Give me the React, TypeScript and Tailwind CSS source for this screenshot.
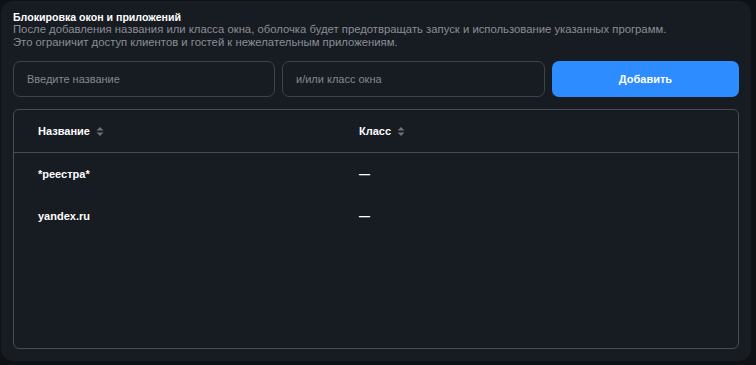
import React from "react";

function SortIcon() {
  return (
    <svg width="8" height="11" viewBox="0 0 8 11" className="ml-[6px] shrink-0">
      <path d="M4 1 L7.5 4.5 L0.5 4.5 Z" fill="#6e7179" />
      <path d="M4 10 L7.5 6.5 L0.5 6.5 Z" fill="#6e7179" />
    </svg>
  );
}

export default function App() {
  const rows = [
    { name: "*реестра*", cls: "—" },
    { name: "yandex.ru", cls: "—" },
  ];
  return (
    <div
      className="w-[756px] h-[365px] bg-[#0e1216] p-[1px] pr-[5px] pb-[4px]"
      style={{ fontFamily: '"Liberation Sans", Arial, sans-serif' }}
    >
      <div className="h-full rounded-[12px] bg-[#171b22] p-[12px] pt-[10px] flex flex-col">
        <div className="text-[10.6px] leading-[12px] font-bold text-white">Блокировка окон и приложений</div>
        <div className="text-[11.3px] leading-[13px] text-[#8b8e94]">
          После добавления названия или класса окна, оболочка будет предотвращать запуск и использование указанных программ.
          <br />
          Это ограничит доступ клиентов и гостей к нежелательным приложениям.
        </div>
        <div className="mt-[12px] flex gap-[7px] h-[36px]">
          <div className="w-[262px] rounded-[7px] border border-[#3f424a] flex items-center px-[13px] text-[11px] text-[#85888e]">
            Введите название
          </div>
          <div className="w-[263px] rounded-[7px] border border-[#3f424a] flex items-center px-[13px] text-[11px] text-[#85888e]">
            и/или класс окна
          </div>
          <div className="flex-1 rounded-[7px] bg-[#2d8cff] flex items-center justify-center text-[11px] font-bold text-white">
            Добавить
          </div>
        </div>
        <div className="mt-[12px] flex-1 rounded-[6px] border border-[#4a4c55] flex flex-col">
          <div className="h-[43px] flex items-center border-b border-[#4a4c55] text-[11px] font-bold text-white">
            <div className="w-[345px] pl-[24px] flex items-center">
              Название
              <SortIcon />
            </div>
            <div className="flex items-center">
              Класс
              <SortIcon />
            </div>
          </div>
          {rows.map((r) => (
            <div key={r.name} className="h-[42px] flex items-center text-[11px] font-bold text-white">
              <div className="w-[345px] pl-[24px]">{r.name}</div>
              <div>{r.cls}</div>
            </div>
          ))}
        </div>
      </div>
    </div>
  );
}
